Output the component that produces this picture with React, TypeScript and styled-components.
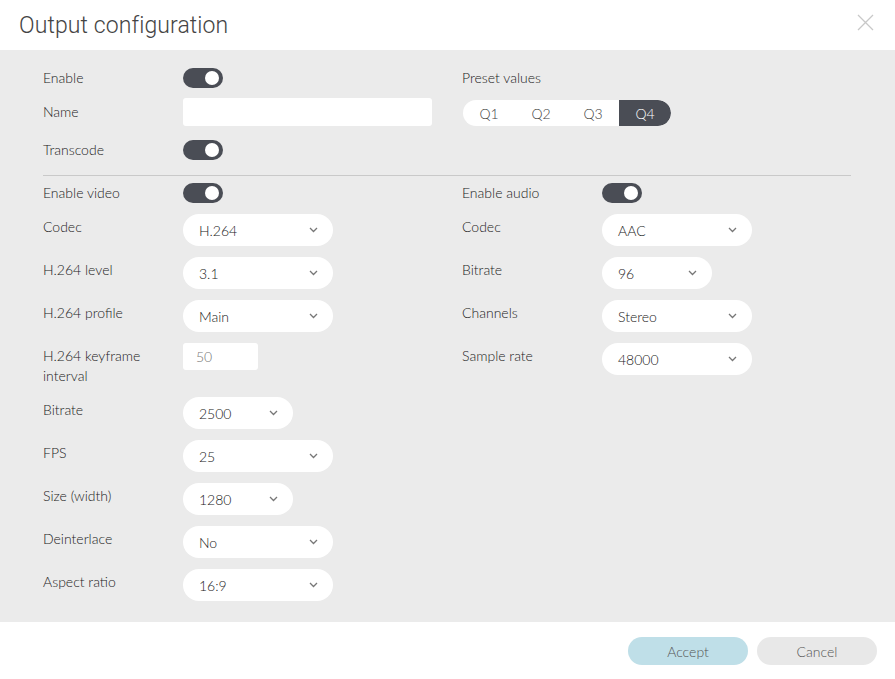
import styled, { createGlobalStyle } from "styled-components";

const Global = createGlobalStyle`
  html, body { margin: 0; padding: 0; }
  body { font-family: Lato, "Open Sans", sans-serif; font-weight: 300; color: #222; background: #fff; }
  * { box-sizing: border-box; }
`;

const Dialog = styled.div`
  width: 895px;
  height: 679px;
  display: flex;
  flex-direction: column;
  background: #fff;
`;

const Header = styled.div`
  height: 50px;
  flex-shrink: 0;
  display: flex;
  align-items: flex-start;
  justify-content: space-between;
  padding: 11px 21px 0 19px;
`;

const Title = styled.h1`
  margin: 0;
  font-family: Roboto, sans-serif;
  font-weight: 300;
  font-size: 23px;
  line-height: 30px;
  letter-spacing: 0.1px;
  color: #444;
`;

const Close = styled.button`
  border: none;
  background: none;
  padding: 0;
  margin-top: 3px;
  width: 17px;
  height: 17px;
  cursor: pointer;
  display: flex;
`;

const Body = styled.div`
  flex: 1;
  background: #ebebeb;
  padding: 18px 44px 0 43px;
`;

const Columns = styled.div`
  display: grid;
  grid-template-columns: 419px 1fr;
`;

const Stack = styled.div<{ $gap?: number }>`
  display: flex;
  flex-direction: column;
  gap: ${(p) => p.$gap ?? 11}px;
`;

const Row = styled.div<{ $center?: boolean; $mt?: number }>`
  display: grid;
  grid-template-columns: 140px 1fr;
  align-items: ${(p) => (p.$center ? "center" : "flex-start")};
  margin-top: ${(p) => p.$mt ?? 0}px;
`;

const Label = styled.div<{ $top?: boolean }>`
  font-size: 14px;
  line-height: 20px;
  padding-top: ${(p) => (p.$top ? 3 : 0)}px;
  padding-right: 10px;
`;

const Divider = styled.hr`
  border: none;
  border-top: 1px solid #c9c9c9;
  margin: 15px 0 7px;
`;

const ToggleTrack = styled.div`
  width: 40px;
  height: 20px;
  border-radius: 10px;
  background: #4a4d55;
  display: flex;
  align-items: center;
  justify-content: flex-end;
  padding-right: 4px;
`;

const Knob = styled.div`
  width: 14px;
  height: 14px;
  border-radius: 50%;
  background: #fff;
`;

const TextInput = styled.input<{ $w: number }>`
  width: ${(p) => p.$w}px;
  height: ${(p) => (p.$w > 100 ? 28 : 27)}px;
  border: none;
  border-radius: 3px;
  background: #fff;
  font-family: Lato, sans-serif;
  font-weight: 300;
  font-size: 14px;
  color: #777;
  padding: 0 13px;
  outline: none;
`;

const SelectBox = styled.div<{ $w: number }>`
  width: ${(p) => p.$w}px;
  height: 32px;
  border-radius: 16px;
  background: #fff;
  display: flex;
  align-items: center;
  justify-content: space-between;
  padding: 0 15px 0 16px;
  font-size: 14px;
  color: #222;
`;

const Segmented = styled.div`
  display: flex;
  width: 208px;
  height: 26px;
  border-radius: 13px;
  background: #fff;
  overflow: hidden;
  margin-left: 1px;
`;

const Segment = styled.div<{ $active?: boolean }>`
  flex: 1;
  display: flex;
  align-items: center;
  justify-content: center;
  font-size: 14px;
  background: ${(p) => (p.$active ? "#4a4d55" : "transparent")};
  color: ${(p) => (p.$active ? "#fff" : "#444")};
  border-radius: ${(p) => (p.$active ? "0 13px 13px 0" : "0")};
`;

const Footer = styled.div`
  height: 57px;
  flex-shrink: 0;
  display: flex;
  align-items: center;
  justify-content: flex-end;
  gap: 9px;
  padding: 1px 18px 0 0;
`;

const Button = styled.button<{ $primary?: boolean }>`
  width: 120px;
  height: 28px;
  border: none;
  border-radius: 14px;
  background: ${(p) => (p.$primary ? "#bfdfe8" : "#e8e8e8")};
  color: #555;
  font-family: Lato, sans-serif;
  font-weight: 300;
  font-size: 14px;
  cursor: pointer;
`;

const Toggle = () => (
  <ToggleTrack>
    <Knob />
  </ToggleTrack>
);

const Chevron = () => (
  <svg width="9" height="6" viewBox="0 0 9 6">
    <path d="M1 1l3.5 3.5L8 1" fill="none" stroke="#777" strokeWidth="1.3" />
  </svg>
);

const Select = ({ value, w = 150 }: { value: string; w?: number }) => (
  <SelectBox $w={w}>
    <span>{value}</span>
    <Chevron />
  </SelectBox>
);

const ToggleRow = ({ label }: { label: string }) => (
  <Row $center>
    <Label>{label}</Label>
    <Toggle />
  </Row>
);

const SelectRow = ({ label, value, w }: { label: string; value: string; w?: number }) => (
  <Row>
    <Label $top>{label}</Label>
    <Select value={value} w={w} />
  </Row>
);

export default function App() {
  return (
    <>
      <Global />
      <Dialog>
        <Header>
          <Title>Output configuration</Title>
          <Close aria-label="Close">
            <svg width="17" height="17" viewBox="0 0 17 17">
              <path d="M1 1l15 15M16 1L1 16" stroke="#c8c8c8" strokeWidth="1.3" />
            </svg>
          </Close>
        </Header>
        <Body>
          <Columns>
            <Stack $gap={0}>
              <ToggleRow label="Enable" />
              <Row $center $mt={10}>
                <Label>Name</Label>
                <TextInput $w={249} />
              </Row>
              <Row $center $mt={14}>
                <Label>Transcode</Label>
                <Toggle />
              </Row>
            </Stack>
            <Stack $gap={12}>
              <Label>Preset values</Label>
              <Segmented>
                <Segment>Q1</Segment>
                <Segment>Q2</Segment>
                <Segment>Q3</Segment>
                <Segment $active>Q4</Segment>
              </Segmented>
            </Stack>
          </Columns>
          <Divider />
          <Columns>
            <Stack>
              <ToggleRow label="Enable video" />
              <SelectRow label="Codec" value="H.264" />
              <SelectRow label="H.264 level" value="3.1" />
              <SelectRow label="H.264 profile" value="Main" />
              <Row>
                <Label $top>H.264 keyframe interval</Label>
                <TextInput $w={75} defaultValue="50" />
              </Row>
              <SelectRow label="Bitrate" value="2500" w={110} />
              <SelectRow label="FPS" value="25" />
              <SelectRow label="Size (width)" value="1280" w={110} />
              <SelectRow label="Deinterlace" value="No" />
              <SelectRow label="Aspect ratio" value="16:9" />
            </Stack>
            <Stack>
              <ToggleRow label="Enable audio" />
              <SelectRow label="Codec" value="AAC" />
              <SelectRow label="Bitrate" value="96" w={110} />
              <SelectRow label="Channels" value="Stereo" />
              <SelectRow label="Sample rate" value="48000" />
            </Stack>
          </Columns>
        </Body>
        <Footer>
          <Button $primary>Accept</Button>
          <Button>Cancel</Button>
        </Footer>
      </Dialog>
    </>
  );
}
